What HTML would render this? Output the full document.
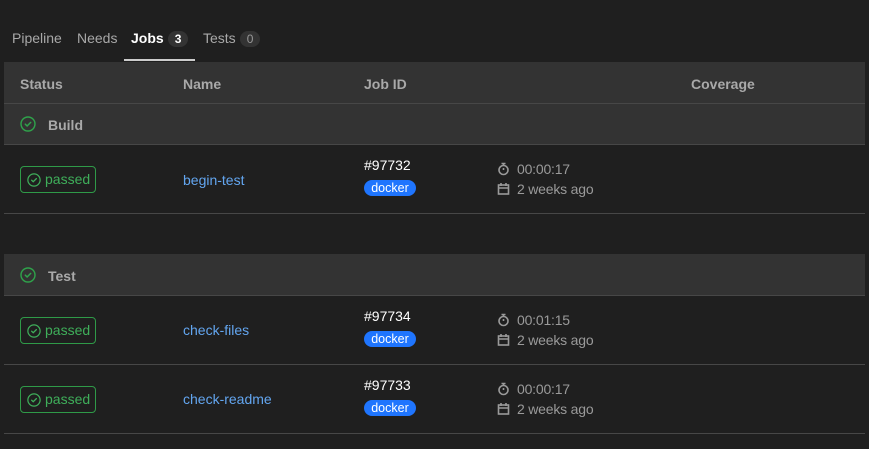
<!DOCTYPE html>
<html><head><meta charset="utf-8"><style>
*{margin:0;padding:0;box-sizing:border-box}
body{width:869px;height:449px;background:#1f1f1f;font-family:"Liberation Sans",sans-serif;font-size:14px;color:#bfbfbf;position:relative;overflow:hidden}
.a{position:absolute}
.tab{top:30px;font-size:14px;color:#a8a8a8}
.cnt{display:inline-block;background:#333;color:#bfbfbf;border-radius:9px;padding:1px 7px;font-size:12px;margin-left:4px}
.hdr{left:4px;width:861px;background:#333;border-bottom:1px solid #474747}
.hd{font-weight:bold;color:#a9a9a9;font-size:14px}
.line{left:4px;width:861px;height:1px;background:#474747}
.badge{left:20px;width:76px;height:27px;border:1px solid #2f9a48;border-radius:4px;color:#3fae5a;font-size:14px;padding-left:24px;line-height:25px}
.badge svg{position:absolute;left:6px;top:6px}
.name{left:183px;color:#63a6f0}
.id{left:364px;color:#fff}
.dock{left:364px;background:#1f75fe;color:#fff;font-size:12.5px;border-radius:9px;width:52px;height:16px;line-height:16px;text-align:center}
.meta{left:497px;color:#9a9a9a}
.meta span{position:absolute;left:20px;white-space:nowrap;letter-spacing:-0.2px}
</style></head><body>
<div class="a tab" style="left:12px">Pipeline</div>
<div class="a tab" style="left:77px">Needs</div>
<div class="a tab" style="left:131px;color:#fff;font-weight:bold">Jobs<span class="cnt" style="color:#fff">3</span></div>
<div class="a tab" style="left:203px">Tests<span class="cnt" style="color:#999">0</span></div>
<div class="a" style="left:124px;top:59px;width:71px;height:2px;background:#ccc"></div>

<div class="a hdr" style="top:62px;height:42px"></div>
<div class="a hd" style="left:20px;top:76px">Status</div>
<div class="a hd" style="left:183px;top:76px">Name</div>
<div class="a hd" style="left:364px;top:76px">Job ID</div>
<div class="a hd" style="left:691px;top:76px">Coverage</div>

<div class="a hdr" style="top:104px;height:41px"></div>
<svg class="a" style="left:20px;top:116px" width="16" height="16" viewBox="0 0 16 16"><circle cx="8" cy="8" r="7" fill="none" stroke="#2fa34b" stroke-width="1.4"/><path d="M5.3 8.2l1.8 1.8 3.6-3.6" fill="none" stroke="#2fa34b" stroke-width="1.5" stroke-linecap="round"/></svg>
<div class="a hd" style="left:48px;top:117px">Build</div>

<div class="a badge" style="top:166px"><svg width="14" height="14" viewBox="0 0 16 16"><circle cx="8" cy="8" r="7" fill="none" stroke="#3fae5a" stroke-width="1.4"/><path d="M5.3 8.2l1.8 1.8 3.6-3.6" fill="none" stroke="#3fae5a" stroke-width="1.5" stroke-linecap="round"/></svg>passed</div>
<div class="a name" style="top:172px">begin-test</div>
<div class="a id" style="top:157px">#97732</div>
<div class="a dock" style="top:180px">docker</div>
<div class="a meta" style="top:162px"><svg width="13" height="14" viewBox="0 0 13 14" class="a" style="top:0"><circle cx="6.5" cy="8" r="4.5" fill="none" stroke="#9a9a9a" stroke-width="1.6"/><path d="M4.5 1.5h4M6.5 1.5v2M6.5 8V6" stroke="#9a9a9a" stroke-width="1.6"/></svg><span style="top:-1px">00:00:17</span></div>
<div class="a meta" style="top:182px"><svg width="13" height="14" viewBox="0 0 13 14" class="a" style="top:0"><rect x="1.5" y="3" width="10" height="9" fill="none" stroke="#9a9a9a" stroke-width="1.6"/><path d="M1.5 6h10M4 1v3M9 1v3" stroke="#9a9a9a" stroke-width="1.6"/></svg><span style="top:-1px">2 weeks ago</span></div>
<div class="a line" style="top:213px"></div>

<div class="a hdr" style="top:254px;height:42px"></div>
<svg class="a" style="left:20px;top:267px" width="16" height="16" viewBox="0 0 16 16"><circle cx="8" cy="8" r="7" fill="none" stroke="#2fa34b" stroke-width="1.4"/><path d="M5.3 8.2l1.8 1.8 3.6-3.6" fill="none" stroke="#2fa34b" stroke-width="1.5" stroke-linecap="round"/></svg>
<div class="a hd" style="left:48px;top:268px">Test</div>

<div class="a badge" style="top:317px"><svg width="14" height="14" viewBox="0 0 16 16"><circle cx="8" cy="8" r="7" fill="none" stroke="#3fae5a" stroke-width="1.4"/><path d="M5.3 8.2l1.8 1.8 3.6-3.6" fill="none" stroke="#3fae5a" stroke-width="1.5" stroke-linecap="round"/></svg>passed</div>
<div class="a name" style="top:322px">check-files</div>
<div class="a id" style="top:308px">#97734</div>
<div class="a dock" style="top:331px">docker</div>
<div class="a meta" style="top:313px"><svg width="13" height="14" viewBox="0 0 13 14" class="a"><circle cx="6.5" cy="8" r="4.5" fill="none" stroke="#9a9a9a" stroke-width="1.6"/><path d="M4.5 1.5h4M6.5 1.5v2M6.5 8V6" stroke="#9a9a9a" stroke-width="1.6"/></svg><span style="top:-1px">00:01:15</span></div>
<div class="a meta" style="top:333px"><svg width="13" height="14" viewBox="0 0 13 14" class="a"><rect x="1.5" y="3" width="10" height="9" fill="none" stroke="#9a9a9a" stroke-width="1.6"/><path d="M1.5 6h10M4 1v3M9 1v3" stroke="#9a9a9a" stroke-width="1.6"/></svg><span style="top:-1px">2 weeks ago</span></div>
<div class="a line" style="top:364px"></div>

<div class="a badge" style="top:386px"><svg width="14" height="14" viewBox="0 0 16 16"><circle cx="8" cy="8" r="7" fill="none" stroke="#3fae5a" stroke-width="1.4"/><path d="M5.3 8.2l1.8 1.8 3.6-3.6" fill="none" stroke="#3fae5a" stroke-width="1.5" stroke-linecap="round"/></svg>passed</div>
<div class="a name" style="top:391px">check-readme</div>
<div class="a id" style="top:377px">#97733</div>
<div class="a dock" style="top:400px">docker</div>
<div class="a meta" style="top:382px"><svg width="13" height="14" viewBox="0 0 13 14" class="a"><circle cx="6.5" cy="8" r="4.5" fill="none" stroke="#9a9a9a" stroke-width="1.6"/><path d="M4.5 1.5h4M6.5 1.5v2M6.5 8V6" stroke="#9a9a9a" stroke-width="1.6"/></svg><span style="top:-1px">00:00:17</span></div>
<div class="a meta" style="top:402px"><svg width="13" height="14" viewBox="0 0 13 14" class="a"><rect x="1.5" y="3" width="10" height="9" fill="none" stroke="#9a9a9a" stroke-width="1.6"/><path d="M1.5 6h10M4 1v3M9 1v3" stroke="#9a9a9a" stroke-width="1.6"/></svg><span style="top:-1px">2 weeks ago</span></div>
<div class="a line" style="top:433px"></div>
</body></html>
